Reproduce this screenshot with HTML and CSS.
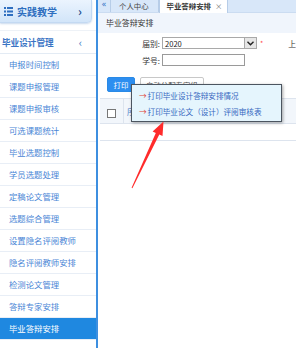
FILE: index.html
```html
<!DOCTYPE html>
<html lang="zh">

<head>
    <meta charset="UTF-8">
    <title>毕业答辩安排</title>
    <link rel="stylesheet" href="styles.css">
</head>

<body>
    <div class="page">
        <aside class="side">
            <div class="side-head">
                <svg class="list-ico" width="9" height="9" viewBox="0 0 9 9">
                    <rect x="0" y="0" width="2" height="2" fill="#2f6fc0"/>
                    <rect x="3" y="0" width="6" height="2" fill="#2f6fc0"/>
                    <rect x="0" y="3.5" width="2" height="2" fill="#2f6fc0"/>
                    <rect x="3" y="3.5" width="6" height="2" fill="#2f6fc0"/>
                    <rect x="0" y="7" width="2" height="2" fill="#2f6fc0"/>
                    <rect x="3" y="7" width="6" height="2" fill="#2f6fc0"/>
                </svg>
                <span class="head-text">实践教学</span>
                <span class="head-chev">›</span>
            </div>
            <div class="group">毕业设计管理<span class="group-chev">‹</span></div>
            <ul class="menu">
                <li>申报时间控制</li>
                <li>课题申报管理</li>
                <li>课题申报审核</li>
                <li>可选课题统计</li>
                <li>毕业选题控制</li>
                <li>学员选题处理</li>
                <li>定稿论文管理</li>
                <li>选题综合管理</li>
                <li>设置隐名评阅教师</li>
                <li>隐名评阅教师安排</li>
                <li>检测论文管理</li>
                <li>答辩专家安排</li>
                <li class="active">毕业答辩安排</li>
            </ul>
        </aside>

        <main class="main">
            <div class="tabs">
                <span class="tab-back">«</span>
                <span class="tab">个人中心</span>
                <span class="tab current">毕业答辩安排<i class="close">×</i></span>
            </div>
            <div class="title">毕业答辩安排</div>

            <div class="form">
                <div class="row">
                    <label>届别:</label>
                    <div class="select">2020<span class="select-btn">
                        <svg width="7" height="5" viewBox="0 0 7 5"><path d="M0.5 0.8 L3.5 3.8 L6.5 0.8" fill="none" stroke="#222" stroke-width="1.4"/></svg>
                    </span></div>
                    <span class="req">*</span>
                    <span class="extra">上</span>
                </div>
                <div class="row">
                    <label>学号:</label>
                    <div class="input"></div>
                </div>
            </div>

            <div class="toolbar">
                <button class="btn primary">打印</button>
                <button class="btn">自动分配专家组</button>
                <div class="popup">
                    <div class="popup-item"><span class="arr">→</span>打印毕业设计答辩安排情况</div>
                    <div class="popup-item"><span class="arr">→</span>打印毕业论文（设计）评阅审核表</div>
                </div>
            </div>

            <table class="grid">
                <tr class="grid-head">
                    <td class="chk-cell"><span class="chk"></span></td>
                    <td class="col">序</td>
                </tr>
                <tr class="grid-row">
                    <td></td>
                    <td></td>
                </tr>
            </table>
        </main>

        <svg class="pointer" width="296" height="348" viewBox="0 0 296 348">
            <polygon points="163.5,121.5 162.5,136 159.3,134.6 132.4,188.2 131.6,187.8 155.8,133.1 152.6,131.6" fill="#ff2b2b"/>
        </svg>
    </div>
</body>

</html>
```

FILE: styles.css
```css
body {
    margin: 0;
    background: #fff;
    font-family: "Noto Sans CJK SC", "Liberation Sans", sans-serif;
    color: #333;
}

.page {
    position: relative;
    display: flex;
    width: 296px;
    height: 348px;
    overflow: hidden;
}

.side {
    width: 96px;
    flex: none;
    border-right: 2px solid #3d8fe0;
    background: #fff;
}

.side-head {
    height: 23px;
    display: flex;
    align-items: center;
    padding-left: 4px;
    box-sizing: border-box;
    width: 92px;
    background: linear-gradient(#ebf4fe, #d2e5f9);
    border: 1px solid #c3d9f2;
    border-top: none;
    border-left: none;
    border-radius: 0 0 5px 0;
    box-shadow: 0 1px 2px rgba(120, 160, 210, 0.4);
}

.list-ico {
    margin-right: 4px;
}

.head-text {
    font-size: 10px;
    font-weight: bold;
    color: #2f6fc0;
    flex: 1;
}

.head-chev {
    font-size: 12px;
    font-weight: bold;
    color: #1f4f90;
    margin-right: 9px;
    line-height: 1;
}

.group {
    margin-top: 7px;
    height: 22px;
    border-top: 1px solid #eef2f7;
    border-bottom: 1px solid #e3ebf4;
    display: flex;
    align-items: center;
    justify-content: space-between;
    padding: 0 14px 0 2px;
    font-size: 8.6px;
    font-weight: bold;
    color: #3a74c4;
}

.group-chev {
    font-size: 11px;
    font-weight: normal;
    color: #3a74c4;
}

.menu {
    list-style: none;
    margin: 0;
    padding: 0;
}

.menu li {
    height: 21px;
    line-height: 21px;
    border-bottom: 1px solid #e8eef6;
    padding-left: 9px;
    font-size: 8.4px;
    color: #4a86d6;
    white-space: nowrap;
}

.menu li.active {
    background: #1f88e0;
    color: #fff;
}

.main {
    flex: 1;
    min-width: 0;
}

.tabs {
    height: 13px;
    display: flex;
    background: #d8e7f9;
    border-bottom: 1px solid #cbdcf1;
    box-sizing: border-box;
    font-size: 7.4px;
    line-height: 11px;
}

.tab-back {
    width: 12px;
    text-align: center;
    color: #2e6fc4;
    font-family: "DejaVu Sans", sans-serif;
    font-size: 8px;
    line-height: 10px;
    border-right: 1px solid #b7cde8;
}

.tab {
    padding: 0 9px 0 8px;
    border-right: 1px solid #b7cde8;
    color: #444;
}

.tab.current {
    background: #fff;
    border-left: 1px solid #b7cde8;
    height: 13px;
    font-weight: bold;
    color: #333;
    padding: 0 5px 0 7px;
}

.tab .close {
    font-style: normal;
    font-weight: normal;
    margin-left: 4px;
    color: #777;
}

.title {
    height: 20px;
    line-height: 20px;
    padding-left: 8px;
    background: #f0f5fc;
    font-size: 7.9px;
    color: #333;
}

.form {
    padding-top: 4px;
    display: flex;
    flex-direction: column;
    gap: 5px;
}

.row {
    display: flex;
    align-items: center;
    height: 12px;
    font-size: 7.8px;
}

.row label {
    width: 62px;
    margin-right: 2px;
    text-align: right;
}

.select {
    width: 95px;
    height: 12px;
    box-sizing: border-box;
    border: 1px solid #a9a9a9;
    display: flex;
    align-items: center;
    justify-content: space-between;
    padding-left: 2px;
    font-size: 7.6px;
    color: #222;
}

.select-btn {
    width: 11px;
    height: 10px;
    background: #e6e6e6;
    border-left: 1px solid #a9a9a9;
    display: flex;
    align-items: center;
    justify-content: center;
}

.req {
    color: #ff4a4a;
    margin-left: 3px;
    font-size: 7px;
}

.extra {
    margin-left: 25px;
}

.input {
    width: 83px;
    height: 12px;
    box-sizing: border-box;
    border: 1px solid #9a9a9a;
}

.toolbar {
    position: relative;
    margin-top: 11px;
    padding-left: 9px;
    display: flex;
    gap: 5px;
    height: 15px;
}

.btn {
    height: 15px;
    padding: 0 5px;
    border: 1px solid #c8c8c8;
    border-radius: 2px;
    background: #fff;
    font-family: inherit;
    font-size: 7.4px;
    color: #555;
    line-height: 13px;
}

.btn.primary {
    width: 28px;
    padding: 0;
    border-color: #2a8ae6;
    background: #2d8ef0;
    color: #fff;
}

.popup {
    position: absolute;
    left: 33px;
    top: 7px;
    width: 151px;
    height: 38px;
    box-sizing: border-box;
    border: 1px solid #4c5560;
    background: #e5f5fd;
    box-shadow: 1px 1px 3px rgba(0, 0, 0, 0.35);
    padding: 3px 0 0 7px;
    z-index: 2;
}

.popup-item {
    height: 16px;
    line-height: 16px;
    font-size: 7.6px;
    color: #3567c0;
    white-space: nowrap;
}

.arr {
    color: #e0443a;
    margin-right: 1px;
}

.grid {
    margin-top: 6px;
    margin-left: 2px;
    width: calc(100% - 2px);
    border-collapse: collapse;
}

.grid-head td {
    height: 20px;
    background: #f2f6fb;
    border-top: 1px solid #dde4ee;
    border-bottom: 1px solid #dde4ee;
    padding: 0;
}

.grid-head .chk-cell {
    width: 23px;
    border-right: 1px solid #dde4ee;
    text-align: center;
}

.chk {
    display: inline-block;
    width: 7px;
    height: 7px;
    border: 1px solid #777;
    background: #fff;
    vertical-align: middle;
}

.grid-head .col {
    padding-left: 3px;
    font-size: 7.6px;
    color: #3a74c4;
}

.grid-row td {
    height: 16px;
    border-bottom: 1px solid #dde4ee;
    padding: 0;
}

.pointer {
    position: absolute;
    left: 0;
    top: 0;
    pointer-events: none;
    z-index: 3;
}
```
